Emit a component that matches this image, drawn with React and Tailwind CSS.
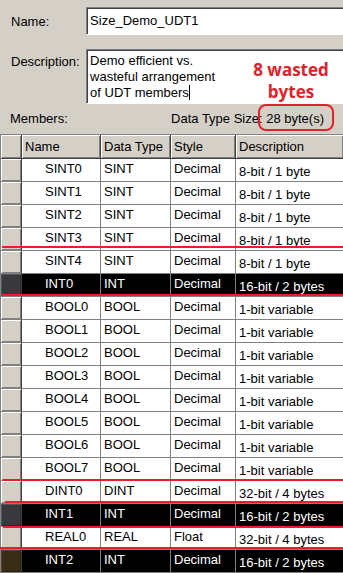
import React from "react";

const ROWS = [
  { name: "SINT0", type: "SINT", style: "Decimal", desc: "8-bit / 1 byte" },
  { name: "SINT1", type: "SINT", style: "Decimal", desc: "8-bit / 1 byte" },
  { name: "SINT2", type: "SINT", style: "Decimal", desc: "8-bit / 1 byte" },
  { name: "SINT3", type: "SINT", style: "Decimal", desc: "8-bit / 1 byte" },
  { name: "SINT4", type: "SINT", style: "Decimal", desc: "8-bit / 1 byte" },
  { name: "INT0", type: "INT", style: "Decimal", desc: "16-bit / 2 bytes", mark: "gray" },
  { name: "BOOL0", type: "BOOL", style: "Decimal", desc: "1-bit variable" },
  { name: "BOOL1", type: "BOOL", style: "Decimal", desc: "1-bit variable" },
  { name: "BOOL2", type: "BOOL", style: "Decimal", desc: "1-bit variable" },
  { name: "BOOL3", type: "BOOL", style: "Decimal", desc: "1-bit variable" },
  { name: "BOOL4", type: "BOOL", style: "Decimal", desc: "1-bit variable" },
  { name: "BOOL5", type: "BOOL", style: "Decimal", desc: "1-bit variable" },
  { name: "BOOL6", type: "BOOL", style: "Decimal", desc: "1-bit variable" },
  { name: "BOOL7", type: "BOOL", style: "Decimal", desc: "1-bit variable" },
  { name: "DINT0", type: "DINT", style: "Decimal", desc: "32-bit / 4 bytes" },
  { name: "INT1", type: "INT", style: "Decimal", desc: "16-bit / 2 bytes", mark: "gray" },
  { name: "REAL0", type: "REAL", style: "Float", desc: "32-bit / 4 bytes" },
  { name: "INT2", type: "INT", style: "Decimal", desc: "16-bit / 2 bytes", mark: "brown" },
];

const rowHead = {
  gray: "bg-[#39393d] shadow-[inset_1px_1px_0_#55555a,inset_-1px_-1px_0_#2a2a2c]",
  brown: "bg-[#3a2d16] shadow-[inset_1px_1px_0_#54452a,inset_-1px_-1px_0_#2a200e]",
  none: "bg-[#d4d0c8] shadow-[inset_1px_1px_0_#ffffff,inset_-1px_-1px_0_#808080]",
};

function MemberRow({ r }) {
  const cell = r.mark ? "bg-black text-white" : "bg-white text-black";
  const base = `h-[23px] border-r border-b border-[#808080] ${cell} whitespace-nowrap overflow-hidden`;
  return (
    <>
      <div className={`h-[23px] border-r border-b border-r-[#404040] border-b-[#808080] ${rowHead[r.mark || "none"]}`} />
      <div className={`${base} pl-[23px] pt-[2px]`}>{r.name}</div>
      <div className={`${base} pl-[3px] pt-[2px]`}>{r.type}</div>
      <div className={`${base} pl-[3px] pt-[2px]`}>{r.style}</div>
      <div className={`${base} pl-[3px] pt-[5px] border-r-0`}>{r.desc}</div>
    </>
  );
}

export default function App() {
  const head =
    "h-[24px] bg-[#d4d0c8] border-r border-b border-[#404040] shadow-[inset_1px_1px_0_#ffffff,inset_-1px_-1px_0_#808080] pl-[3px] pt-[4px] whitespace-nowrap";

  return (
    <div className="relative w-[343px] h-[573px] overflow-hidden bg-[#d4d0c8] text-black text-[13px] leading-[15px] font-['Liberation_Sans',Arial,sans-serif]">
      {/* Name */}
      <div className="flex items-center pt-[7px]">
        <div className="w-[90px] pl-[11px]">Name:</div>
        <div className="h-[28px] w-[270px] bg-white border-t border-l border-b border-t-[#808080] border-l-[#808080] border-b-white shadow-[inset_1px_1px_0_#404040] pl-[3px] pt-[5px]">
          Size_Demo_UDT1
        </div>
      </div>

      {/* Description */}
      <div className="flex items-start mt-[14px]">
        <div className="w-[90px] pl-[11px] pt-[5px]">Description:</div>
        <div className="h-[55px] w-[270px] bg-white border-t border-l border-b border-t-[#808080] border-l-[#808080] border-b-white shadow-[inset_1px_1px_0_#404040] pl-[3px] pt-[3px] leading-[16px]">
          <div>Demo efficient vs.</div>
          <div>wasteful arrangement</div>
          <div>
            of UDT members
            <span className="inline-block w-px h-[15px] bg-black align-[-3px]" />
          </div>
        </div>
      </div>

      {/* Members line */}
      <div className="flex items-start justify-between h-[30px] pt-[7px] pl-[10px] pr-[19px]">
        <span>Members:</span>
        <span>Data Type Size: 28 byte(s)</span>
      </div>

      {/* Grid */}
      <div className="grid grid-cols-[21px_79px_70px_65px_1fr] border-t border-l border-[#808080]">
        <div className={head} />
        <div className={head}>Name</div>
        <div className={head}>Data Type</div>
        <div className={head}>Style</div>
        <div className={`${head} border-r-0`}>Description</div>
        {ROWS.map((r) => (
          <MemberRow key={r.name} r={r} />
        ))}
      </div>

      {/* Annotations */}
      <div className="absolute left-[251px] top-[59px] w-[80px] text-center text-[17px] leading-[22px] font-bold text-[#e4202a] font-['Open_Sans',sans-serif]">
        <div>8 wasted</div>
        <div>bytes</div>
      </div>
      <div className="absolute left-[258px] top-[104px] w-[76px] h-[27px] border-2 border-[#e4202a] rounded-[8px]" />

      <div className="absolute left-[2px] right-0 top-[246px] h-[2px] bg-[#e4202a]" />
      <div className="absolute left-[2px] right-0 top-[294px] h-[2px] bg-[#e4202a]" />
      <div className="absolute left-[3px] right-0 top-[479px] h-[2px] bg-[#e4202a]" />
      <div className="absolute left-[5px] right-0 top-[501px] h-[2px] bg-[#e4202a]" />
      <div className="absolute left-[3px] right-0 top-[526px] h-[2px] bg-[#e4202a]" />
      <div className="absolute left-0 right-0 top-[547px] h-[2px] bg-[#e4202a]" />
    </div>
  );
}
